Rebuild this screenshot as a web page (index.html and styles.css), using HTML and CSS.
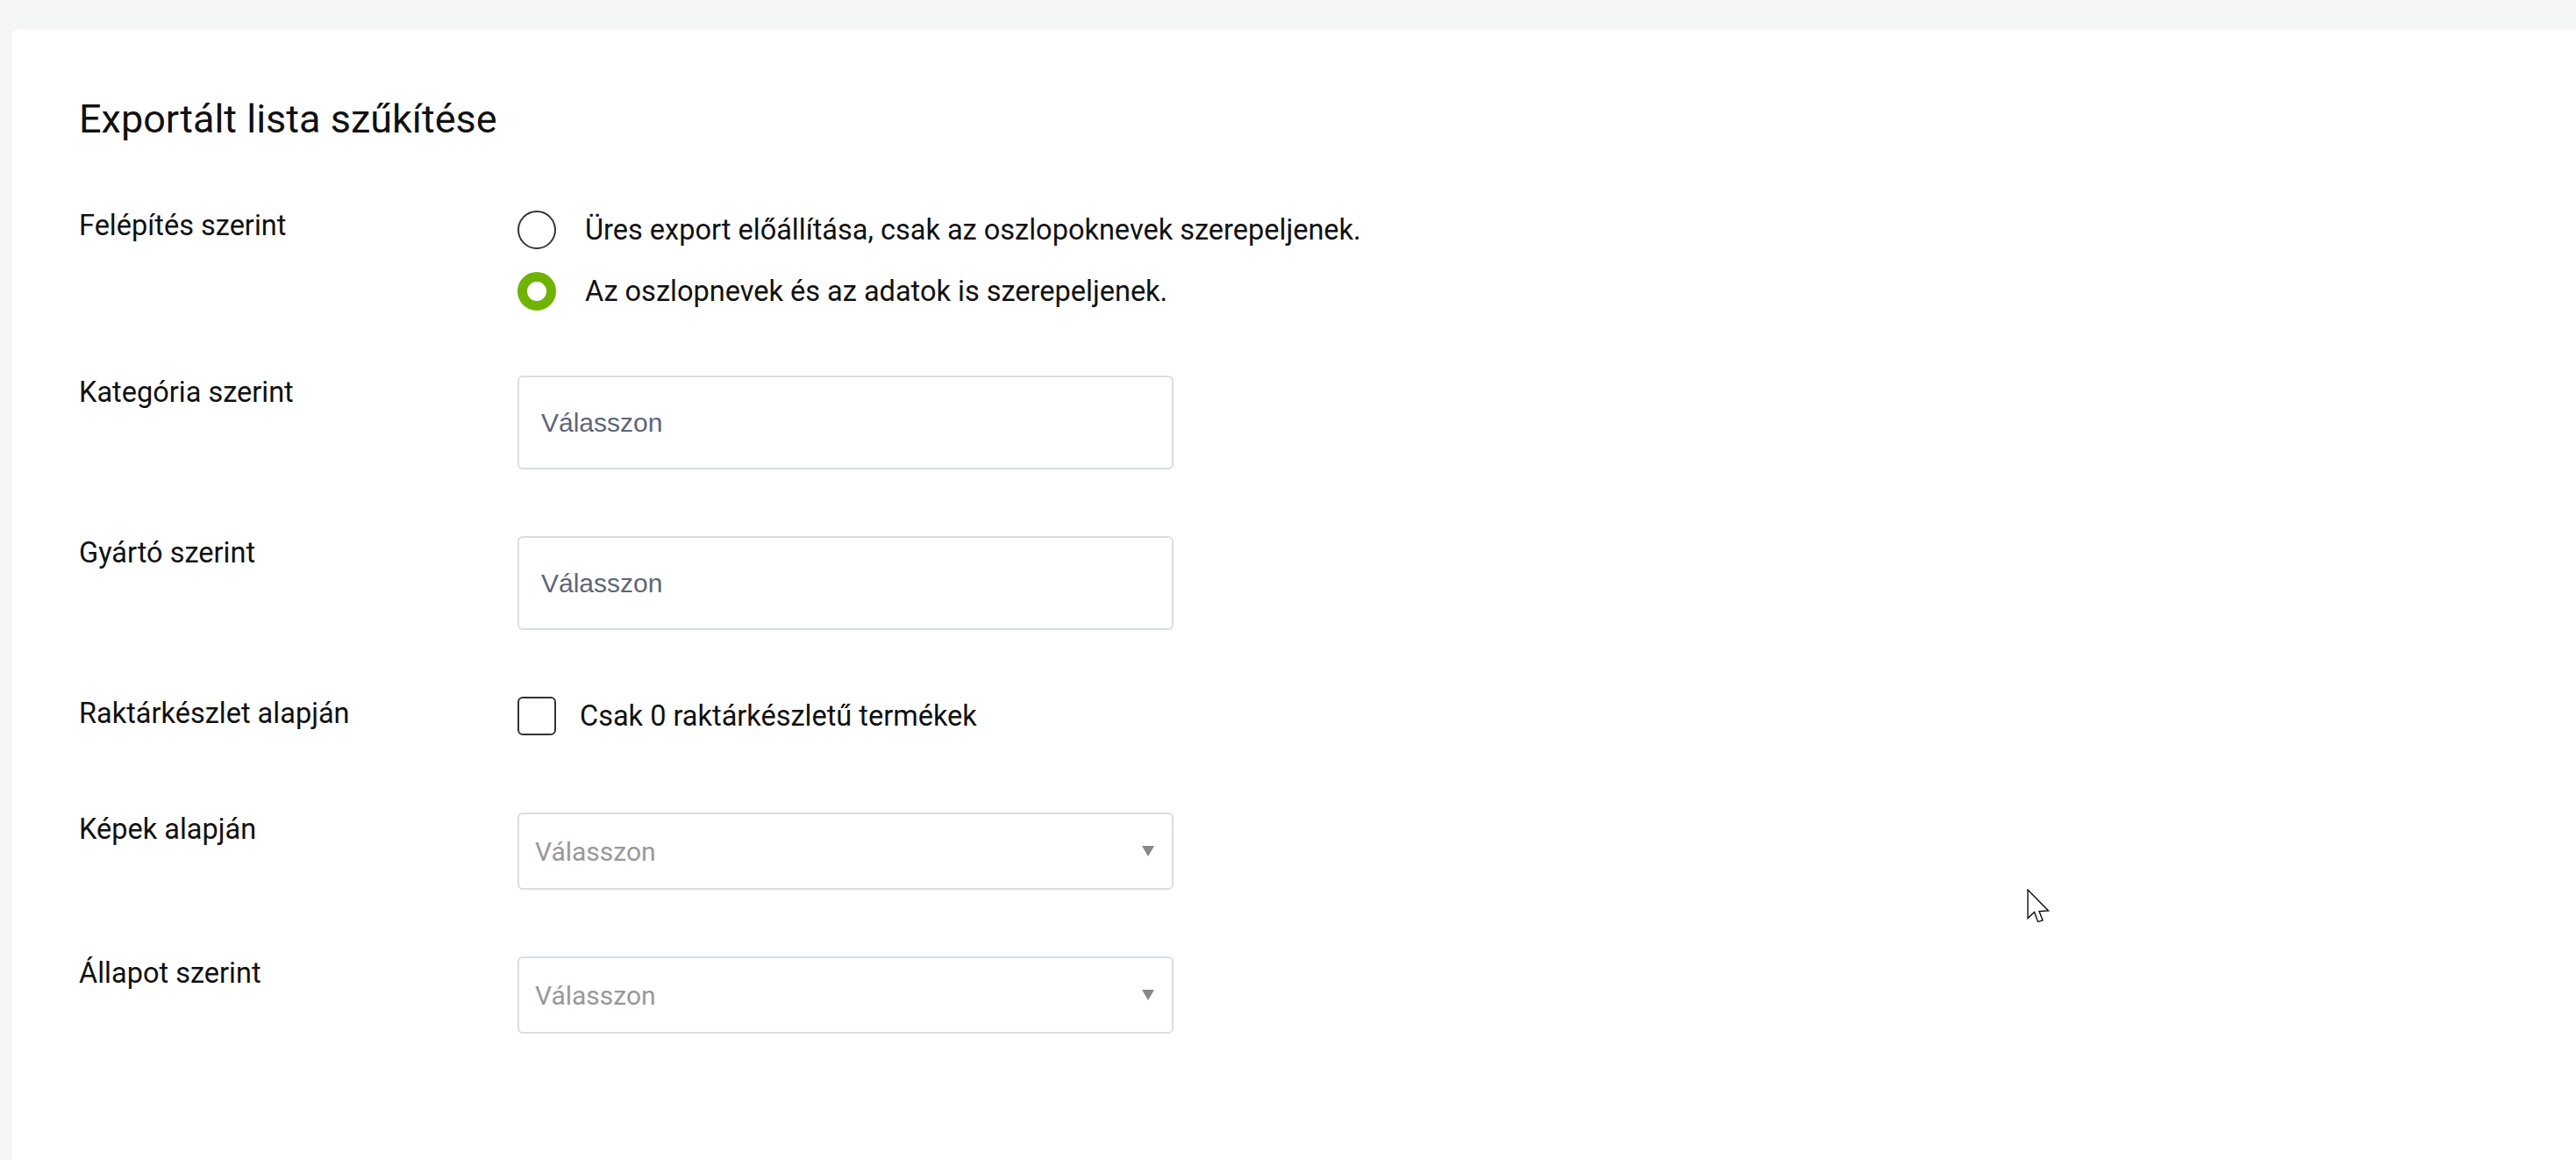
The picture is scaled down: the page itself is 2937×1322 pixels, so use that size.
FILE: index.html
```html
<!DOCTYPE html>
<html lang="hu">
<head>
    <meta charset="utf-8">
    <link rel="stylesheet" href="styles.css">
</head>
<body>
    <div class="export-card">
        <h2 class="card-title">Exportált lista szűkítése</h2>

        <form class="filter-form">
            <!-- Structure -->
            <div class="filter-row">
                <div class="filter-label">Felépítés szerint</div>
                <div class="radio-list">
                    <label class="radio-item">
                        <input type="radio" name="structure" value="empty">
                        <span>Üres export előállítása, csak az oszlopoknevek szerepeljenek.</span>
                    </label>
                    <label class="radio-item">
                        <input type="radio" name="structure" value="full" checked>
                        <span>Az oszlopnevek és az adatok is szerepeljenek.</span>
                    </label>
                </div>
            </div>

            <!-- Category -->
            <div class="filter-row">
                <div class="filter-label">Kategória szerint</div>
                <input type="text" class="text-field" placeholder="Válasszon">
            </div>

            <!-- Manufacturer -->
            <div class="filter-row">
                <div class="filter-label">Gyártó szerint</div>
                <input type="text" class="text-field" placeholder="Válasszon">
            </div>

            <!-- Stock -->
            <div class="filter-row stock-row">
                <div class="filter-label">Raktárkészlet alapján</div>
                <label class="check-item">
                    <input type="checkbox" name="zero_stock">
                    <span>Csak 0 raktárkészletű termékek</span>
                </label>
            </div>

            <!-- Images -->
            <div class="filter-row">
                <div class="filter-label">Képek alapján</div>
                <div class="select-wrap">
                    <select class="select-field">
                        <option value="">Válasszon</option>
                        <option value="1">Van képe</option>
                        <option value="0">Nincs képe</option>
                    </select>
                </div>
            </div>

            <!-- Status -->
            <div class="filter-row">
                <div class="filter-label">Állapot szerint</div>
                <div class="select-wrap">
                    <select class="select-field">
                        <option value="">Válasszon</option>
                        <option value="1">Aktív</option>
                        <option value="0">Inaktív</option>
                    </select>
                </div>
            </div>
        </form>
    </div>

    <svg class="mouse-pointer" width="28" height="40" viewBox="0 0 28 40">
        <path d="M1 1 L1 33.5 L8.5 26.5 L12.5 37.5 L18 35.8 L14 25.5 L24.5 25 Z" fill="#fff" stroke="#000" stroke-width="1.3" stroke-linejoin="miter"/>
    </svg>
</body>
</html>
```

FILE: styles.css
```css
html, body {
    height: 100%;
}

body {
    margin: 0;
    padding: 33px 0 0 14px;
    box-sizing: border-box;
    background: #f4f5f7;
    font-family: Roboto, "Liberation Sans", Arial, sans-serif;
    color: #111;
    overflow: hidden;
}

.export-card {
    background: #fff;
    border-radius: 8px 0 0 0;
    min-height: calc(100vh - 33px);
    padding: 76px 76px;
    box-sizing: border-box;
    display: flex;
    flex-direction: column;
    gap: 76px;
}

.card-title {
    margin: 0;
    font-size: 45px;
    font-weight: 400;
    line-height: 53px;
    color: #111;
}

.filter-form {
    display: flex;
    flex-direction: column;
    gap: 76px;
}

.filter-row {
    display: grid;
    grid-template-columns: 500px auto;
    justify-content: start;
    align-items: start;
}

.stock-row {
    padding-bottom: 12px;
}

.filter-label {
    font-size: 32.5px;
    line-height: 38px;
}

/* radios */
.radio-list {
    display: flex;
    flex-direction: column;
    gap: 26px;
    padding-top: 2px;
    margin-bottom: -2px;
}

.radio-item,
.check-item {
    display: flex;
    align-items: center;
    font-size: 32.5px;
    line-height: 38px;
    white-space: nowrap;
    cursor: pointer;
}

.radio-item input {
    appearance: none;
    -webkit-appearance: none;
    margin: 0 33px 0 0;
    width: 44px;
    height: 44px;
    border: 2px solid #333;
    border-radius: 50%;
    background: #fff;
    box-sizing: border-box;
    flex-shrink: 0;
}

.radio-item input:checked {
    border: 11px solid #6fb304;
}

.check-item input {
    appearance: none;
    -webkit-appearance: none;
    margin: 0 27px 0 0;
    width: 44px;
    height: 44px;
    border: 2px solid #333;
    border-radius: 6px;
    background: #fff;
    box-sizing: border-box;
    flex-shrink: 0;
}

/* text inputs */
.text-field {
    width: 748px;
    height: 107px;
    box-sizing: border-box;
    border: 2px solid #dadde1;
    border-radius: 6px;
    padding: 0 25px;
    font-family: "Liberation Sans", Arial, sans-serif;
    font-size: 30px;
    color: #111;
    outline: none;
}

.text-field::placeholder {
    color: #5c6677;
}

/* selects */
.select-wrap {
    position: relative;
    width: 748px;
}

.select-wrap::after {
    content: "";
    position: absolute;
    right: 22px;
    top: 38px;
    border-left: 7px solid transparent;
    border-right: 7px solid transparent;
    border-top: 12px solid #888;
    pointer-events: none;
}

.select-field {
    appearance: none;
    -webkit-appearance: none;
    width: 100%;
    height: 88px;
    box-sizing: border-box;
    border: 2px solid #dadde1;
    border-radius: 6px;
    padding: 0 50px 0 18px;
    background: #fff;
    font-family: Roboto, sans-serif;
    font-size: 30px;
    color: #999;
    outline: none;
}

.mouse-pointer {
    position: absolute;
    left: 2311px;
    top: 1013px;
}
```
